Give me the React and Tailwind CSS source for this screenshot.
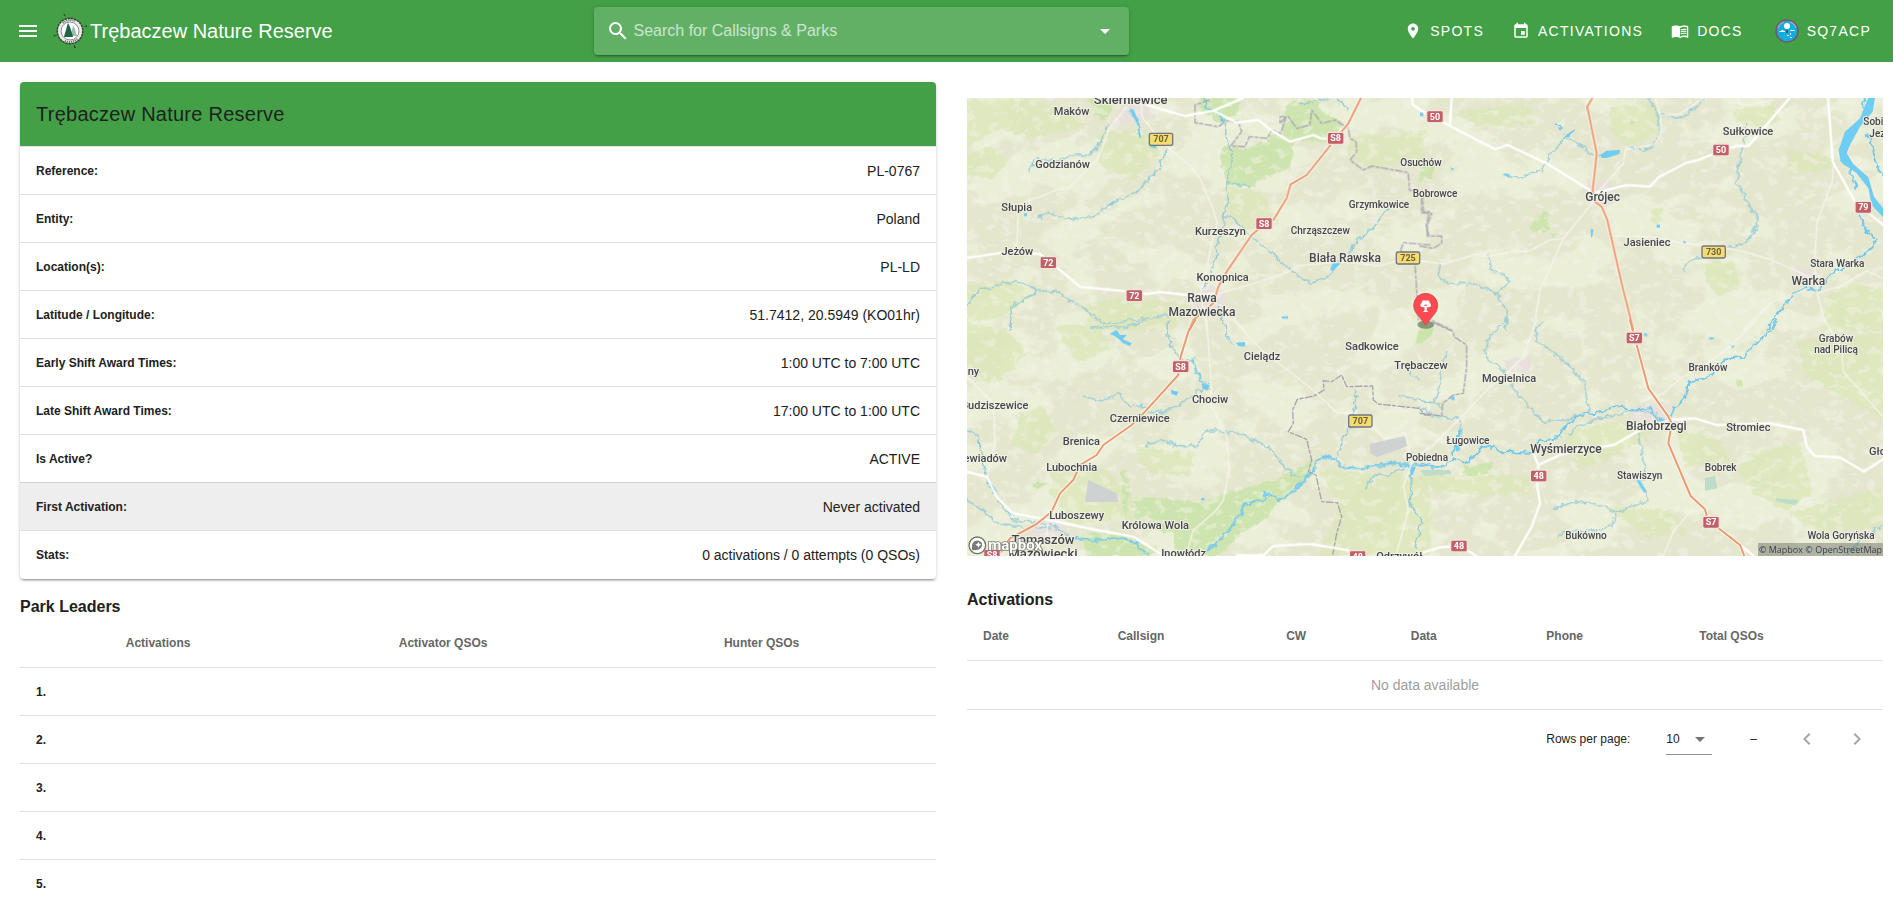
import { useState } from 'react';
import {
    MdArrowDropDown,
    MdChevronLeft,
    MdChevronRight,
    MdEvent,
    MdMenu,
    MdMenuBook,
    MdPlace,
    MdSearch,
} from 'react-icons/md';

const details = [
    { label: 'Reference:', value: 'PL-0767' },
    { label: 'Entity:', value: 'Poland' },
    { label: 'Location(s):', value: 'PL-LD' },
    { label: 'Latitude / Longitude:', value: '51.7412, 20.5949 (KO01hr)' },
    { label: 'Early Shift Award Times:', value: '1:00 UTC to 7:00 UTC' },
    { label: 'Late Shift Award Times:', value: '17:00 UTC to 1:00 UTC' },
    { label: 'Is Active?', value: 'ACTIVE' },
    { label: 'First Activation:', value: 'Never activated', active: true },
    { label: 'Stats:', value: '0 activations / 0 attempts (0 QSOs)' },
];

// [name, x, y, font size, anchor]
const places = [
    ['Skierniewice', 491, 6, 39],
    ['Maków', 314, 37, 33],
    ['Godzianów', 287, 196, 33],
    ['Słupia', 149, 326, 33],
    ['Jeżów', 151, 458, 33],
    ['Kurzeszyn', 760, 399, 33],
    ['Konopnica', 767, 536, 33],
    ['Rawa', 705, 600, 36],
    ['Mazowiecka', 705, 640, 36],
    ['Chrząszczew', 1060, 396, 30],
    ['Grzymkowice', 1236, 316, 30],
    ['Biała Rawska', 1134, 478, 36],
    ['Osuchów', 1362, 191, 30],
    ['Bobrowce', 1404, 284, 30],
    ['Grójec', 1907, 295, 36],
    ['Sułkowice', 2343, 97, 33],
    ['Jasieniec', 2040, 431, 33],
    ['Stara Warka', 2611, 495, 30],
    ['Warka', 2524, 549, 36],
    ['Sobienie', 2689, 69, 30, 'start'],
    ['Jeziory', 2707, 105, 30, 'start'],
    ['Cielądz', 885, 772, 33],
    ['Sadkowice', 1215, 742, 33],
    ['Trębaczew', 1362, 800, 33],
    ['ny', 2, 819, 33, 'start'],
    ['Budziszewice', 184, 920, 33, 'end'],
    ['Chociw', 729, 901, 33],
    ['Czerniewice', 518, 960, 33],
    ['Brenica', 343, 1027, 33],
    ['Niewiadów', 120, 1079, 33, 'end'],
    ['Lubochnia', 314, 1105, 33],
    ['Luboszewy', 329, 1251, 33],
    ['Królowa Wola', 565, 1280, 33],
    ['Tomaszów', 228, 1324, 39],
    ['Mazowiecki', 228, 1368, 39],
    ['Inowłódz', 650, 1364, 33],
    ['Odrzywół', 1297, 1372, 33],
    ['Mogielnica', 1626, 840, 33],
    ['Ługowice', 1503, 1024, 30],
    ['Pobiedna', 1380, 1075, 30],
    ['Wyśmierzyce', 1797, 1053, 36],
    ['Białobrzegi', 2068, 982, 36],
    ['Stromiec', 2344, 987, 33],
    ['Branków', 2223, 805, 30],
    ['Grabów', 2607, 720, 30],
    ['nad Pilicą', 2607, 753, 30],
    ['Stawiszyn', 2018, 1129, 30],
    ['Bobrek', 2261, 1105, 30],
    ['Bukówno', 1857, 1310, 30],
    ['Wola Goryńska', 2622, 1310, 30],
    ['Głowaczów', 2706, 1058, 33, 'start'],
];

const shields = [
    ['S8', 1106, 121],
    ['S8', 891, 377],
    ['72', 244, 494],
    ['72', 502, 593],
    ['50', 1404, 56],
    ['50', 2262, 156],
    ['79', 2689, 328],
    ['S8', 641, 806],
    ['S8', 75, 1372],
    ['48', 1172, 1376],
    ['S7', 2002, 720],
    ['48', 1715, 1134],
    ['48', 1476, 1344],
    ['S7', 2232, 1273],
    ['707', 582, 124],
    ['725', 1323, 480],
    ['730', 2240, 462],
    ['707', 1180, 969],
];

// The map is drawn as four sheets, each with its own origin
const sheets = [
    {
        origin: 'translate(-21 -24)',
        forest: [
            'M790 165 L860 180 L935 140 L1010 110 L990 235 L900 270 L880 292 L800 285 L780 200Z',
            'M720 24 H835 L840 60 L780 100 L720 60Z',
            'M985 40 L1060 24 L1090 60 L1150 100 L1110 155 L985 150 L960 90Z',
            'M385 24 H460 L440 95 L405 75Z',
            'M1380 230 H1425 L1420 265 L1375 262Z',
        ],
        park: [
            'M20 30 L210 26 L300 55 L380 110 L240 140 L110 120 L20 170Z',
            'M20 190 L90 170 L150 210 L100 265 L20 255Z',
            'M790 290 L900 300 L960 400 L840 420 L800 350Z',
            'M380 640 L520 620 L700 650 L640 720 H390Z',
            'M1170 140 L1400 120 L1390 215 L1230 235 L1160 200Z',
            'M420 130 L560 120 L600 190 L520 270 L420 220Z',
            'M20 590 L150 570 L220 610 L130 680 L20 700Z',
        ],
        town: ['M490 40 L560 45 L590 80 L530 100 L480 98 L450 120Z', 'M730 590 L780 585 L800 640 L730 680 L690 670Z'],
        roads: [
            'M0 507 L128 488 L240 492 L300 540 L360 590 L480 602 L560 612 L600 606 L690 616 L770 612',
            'M560 45 L675 78 L760 62 L830 98 L895 90 L930 118 L990 155 L1060 135 L1085 146 L1125 146',
            'M760 62 L850 24',
            'M1356 24 L1358 44 L1384 62 L1425 78',
        ],
        lanes: [
            'M545 24 V80 L575 118 L610 160 L690 228 L720 265 L760 360 L772 400 L755 460 L735 560 L722 610 L740 720',
            'M500 50 L445 120 L425 180 L410 210 L327 293 L290 300 L175 345 L170 480',
            'M770 612 L900 575 L985 545 L1010 528 L1150 515 L1260 528 L1310 512 L1410 515',
            'M760 635 L800 655 L850 720',
        ],
        highways: ['M1203 24 L1165 100 L1120 155 L1040 255 L992 283 L980 325 L940 390 L905 410 L875 435 L800 545 L775 590 L760 640 L700 690 L688 720'],
        streams: [
            'M442 108 L420 160 L385 195 L340 195 L300 210 L225 210 L210 245',
            'M622 175 L600 230 L575 255 L550 285 L520 310 L450 342 L400 380 L320 388 L285 370 L245 372 L238 385',
            'M805 275 L840 285 L872 290',
            'M790 380 L820 385 L870 440 L940 490 L990 540 L1050 580 L1105 560 L1130 525 L1175 480 L1190 450 L1240 415 L1285 350',
            'M20 645 L60 595 L120 585 L170 572 L235 602 L290 605 L370 655 L430 700 L520 690 L610 680 L690 660',
            'M150 720 L155 650 L235 602',
            'M1020 40 L1075 35 L1105 24 M1130 26 L1165 60',
            'M770 640 L790 700',
            'M740 55 L775 70 L795 100 L800 150 L818 185 L815 220 L800 275 L805 330 L790 380 L795 400 L775 450 L765 510 L730 600',
        ],
        rivers: [
            'M510 58 L530 90 L540 140',
            'M735 35 L740 55 L775 70 L790 90',
        ],
        lakes: ['M1118 520 L1135 512 L1142 520 L1120 542 L1110 540Z', 'M192 370 H201 V378 H192Z', 'M964 680 L984 678 V686 H966Z', 'M1380 66 h10 v12 h-8Z', 'M445 345 L465 330 L458 345Z', 'M510 58 L522 60 L534 92 L530 100Z', 'M566 158 L590 168 L588 176 L572 172Z'],
        borders: [
            'M748 30 L705 45 V98 L775 110 L800 92 L835 95 L845 125 L812 168 L855 170 L868 140 L922 145 L935 120 L962 130 L978 82 L960 100 L960 80 L985 80 L1010 115 L1050 105 L1055 60 L1085 100 L1125 90 L1165 115 L1170 145 L1188 155 L1190 185 L1170 210 L1210 240 L1235 228 L1345 248 L1348 300 L1388 310 L1390 365 H1408 L1398 410 L1408 440',
            'M1410 465 L1330 458 L1322 480 L1365 520 L1370 600 L1375 690',
        ],
    },
    {
        origin: 'translate(1359 -24)',
        forest: ['M345 375 L380 368 L395 405 L385 422 L332 425Z', 'M395 436 L408 432 L410 446 L395 448Z', 'M0 235 L12 272 L0 275Z', 'M630 85 l14 -2 v18 l-14 4Z'],
        park: [
            'M850 520 L940 510 L960 590 L900 620 L860 580Z',
            'M950 60 L1060 40 L1080 90 L1010 120 L940 90Z',
            'M570 50 L710 40 L715 130 L620 170 L570 120Z',
            'M1210 620 L1300 580 L1389 600 V720 H1215Z',
            'M1100 180 L1230 200 L1240 240 L1110 250Z',
            'M100 60 L330 40 L340 100 L170 110Z',
            'M690 360 L730 350 L720 400 L690 395Z',
        ],
        town: ['M490 290 L560 270 L600 320 L560 350 L500 340Z', 'M1120 530 L1200 545 L1190 590 L1130 580Z'],
        roads: [
            'M0 60 L60 92 L225 178 L262 165 L380 220 L510 300 L530 308 L620 285 L690 290 L715 262 L800 218 L835 210 L905 182 L950 168 L985 168 L1108 24',
            'M1224 24 L1238 215 L1305 335 L1389 405',
            'M510 20 L520 24 M95 24 L90 100',
        ],
        lanes: [
            'M530 310 L610 220 L615 180 L705 162 L722 130 V78 L705 24 M722 78 L780 72 L850 24',
            'M520 335 L430 445 L410 490 L360 600 L340 720',
            'M0 512 L70 522 L170 492 L205 500 L262 486 L330 482 L390 450 L430 445',
            'M575 438 L690 440 L790 460 L880 468 L960 482 L1050 508 L1100 530 L1165 560',
            'M1240 215 L1238 270 L1190 400 L1183 530 L1190 600 L1215 700',
            'M1165 595 L1050 640 L970 720',
            'M1195 608 L1260 590 L1340 542 L1389 565',
            'M955 24 V40 L985 45 L1060 30',
        ],
        highways: ['M518 22 L502 50 L530 190 L525 240 L518 300 L525 335 L545 350 L562 390 L605 580 L640 720'],
        streams: [
            'M250 255 L300 262 L365 240 L395 190 L430 148 L465 150 L510 190 L540 198',
            'M640 175 L690 180 L718 130 L715 70 L685 24',
            'M722 78 L790 82 L850 30',
            'M980 95 L970 170 L960 210 L950 280 L990 350 L1015 390 L995 440 L950 470 L920 472',
            'M845 505 L800 515 L792 540',
            'M205 500 L215 540 L275 572 L225 608 L262 660 L258 720',
            'M60 522 L55 560 L80 578 L165 582 L225 608',
            'M370 695 L345 720',
        ],
        rivers: [
            'M1315 370 L1335 420 L1370 450 L1350 480 L1290 520 L1230 555 L1195 602 L1160 595 L1120 610 L1085 655 L1060 690 L1040 718',
            'M1340 130 L1360 180 L1375 240 L1389 255 M1330 24 V60 M1265 200 L1290 240 L1310 295',
            'M405 100 L425 118 M430 145 L460 122',
        ],
        lakes: [
            'M1345 24 L1365 24 L1358 65 L1320 110 L1290 165 L1280 190 L1300 222 L1345 262 L1362 320 L1389 355 V382 L1355 345 L1345 295 L1310 250 L1262 215 L1256 180 L1275 125 L1320 85Z',
            'M540 195 L560 182 L600 180 L598 192 L560 204 L545 204Z',
            'M512 418 h8 l-3 24 h-4Z',
            'M710 404 h10 v9 h-10Z',
            'M788 454 h10 v8 h-10Z',
            'M248 253 L268 254 V263Z',
            'M630 172 L642 170 V180Z',
            'M0 68 h8 v10 h-8Z',
            'M90 232 L102 236 L98 242Z',
        ],
        borders: ['M5 325 V368 L35 370 L22 405 V438 H65 V460 L40 475 L0 468', 'M12 680 L95 720'],
    },
    {
        origin: 'translate(-21 666)',
        forest: [
            'M525 528 L720 545 L820 515 L960 475 L1060 420 L1065 455 L980 520 L915 600 L840 640 L780 708 H650 L640 640 L560 620 L525 600Z',
            'M360 640 L480 640 L600 690 L570 708 H380Z',
            'M1370 40 L1410 10 V40Z',
            'M210 490 L240 480 L262 492 L232 508Z',
            'M485 450 L500 450 L510 520 L495 600Z',
        ],
        park: [
            'M20 10 L140 30 L200 100 L110 190 L20 160Z',
            'M270 430 L440 450 L520 540 L520 600 L330 610 L270 520Z',
            'M1070 440 L1190 460 L1410 470 V708 H1080 L1140 560Z',
            'M180 280 L250 260 L290 330 L230 400 L150 380Z',
            'M530 380 L700 400 L690 470 L540 450Z',
            'M290 20 L400 10 L460 80 L350 130Z',
        ],
        town: ['M250 590 L310 610 L330 650 L260 660 L200 640Z', 'M590 600 L560 592 L540 610Z'],
        roads: [
            'M20 455 L80 470 L110 530 L155 578 L265 600 L400 628 L520 650 L600 700',
            'M830 706 L910 706 L940 678 L1050 672 L1160 690 L1200 706',
        ],
        lanes: [
            'M740 0 L755 210 L745 240 L800 345 L808 450 L790 540 L765 575 L700 630 L680 700',
            'M820 0 L905 90 L1060 210 L1130 278 L1190 280 L1275 355 L1335 338 L1355 430 L1410 375',
            'M20 170 L100 250 L105 370 L82 470',
            'M265 600 L258 660 L270 708',
            'M1355 430 L1330 500 L1345 570 L1310 700',
        ],
        highways: ['M706 0 L685 35 L662 110 L655 165 L555 275 L515 315 L430 375 L410 405 L360 435 L340 480 L300 520 L275 575 L230 612 L150 655 L120 700'],
        streams: [
            'M375 230 L420 242 L480 222 L510 258 L545 255 L570 280 L640 268 L700 225 L740 200',
            'M560 375 L600 362 L680 382 L710 375 L740 332 L835 338 L905 370 L945 400 L975 445 L1010 468 L1045 470',
            'M620 0 L625 60 L660 115 L700 125',
            'M20 330 L55 350 L70 430 L85 490 L130 560 L160 600 L270 612 L340 655',
            'M20 540 L70 570 L110 610 L180 620 L270 625',
            'M1190 210 L1175 320 L1150 350 L1140 390 L1125 415',
            'M390 24 L500 20 L560 0 M795 10 L800 50 L820 75',
            'M1215 505 L1240 470 L1300 460 L1330 440',
            'M1355 450 L1350 550 L1385 600 L1365 680',
            'M1320 228 L1410 245 M1350 155 L1375 180',
        ],
        rivers: [
            'M725 708 L760 675 L800 640 L830 600 L860 550 L915 542 L915 520 L940 520 L955 542 L1000 515 L1040 470 L1062 452 L1070 420 L1110 410 L1145 440 L1205 445 L1290 430 L1355 435 L1410 432',
            'M345 655 L400 660 L470 655 L520 665 L560 700 M700 118 L710 160 L740 200',
            'M85 490 L110 520',
        ],
        lakes: [
            'M450 42 L470 30 L480 45 L500 45 L488 58 L515 70 L510 78 L490 70 L468 50Z',
            'M828 68 L855 66 V80 L835 78Z',
            'M632 210 L655 215 L650 227 L635 222Z',
            'M725 192 L748 195 L742 212 L728 205Z',
            'M724 534 h9 v7 h-9Z',
            'M1350 440 h18 l-10 25 h-6Z',
        ],
        airfields: ['M385 480 L470 520 L476 546 L375 546Z', 'M1228 372 L1338 348 L1344 378 L1250 412 L1232 400Z'],
        borders: [
            'M1410 285 L1395 285 L1378 265 L1255 252 L1240 240 L1238 198 L1160 200 L1145 165 L1115 185 L1090 182 L1092 210 L1062 228 L1012 238 L998 270 L1000 310 L985 335 L1040 358 L1055 420 L1045 455 L1068 465 L1085 545 L1132 548 L1145 590 L1130 640 L1118 706',
        ],
    },
    {
        origin: 'translate(1359 666)',
        forest: ['M0 0 L40 8 L0 38Z', 'M950 185 L970 178 L965 205 L950 200Z', 'M130 440 L220 425 L215 455 L120 470Z'],
        park: [
            'M0 460 L330 470 L325 520 L150 530 L0 500Z',
            'M990 400 L1140 370 L1180 520 L1100 570 L1000 520 L950 450Z',
            'M430 340 L600 300 L700 340 L560 420 L480 450Z',
            'M1130 60 L1389 40 V300 L1290 240 L1160 170Z',
            'M760 320 L900 360 L930 420 L800 440Z',
            'M1100 580 L1389 500 V620 L1200 640Z',
            'M560 560 L760 570 L800 640 L680 650Z',
        ],
        town: ['M630 260 L740 240 L760 330 L650 335Z', 'M255 120 L330 110 L330 160 L260 155Z'],
        roads: [
            'M340 400 L355 435 L352 500 L360 550 L335 620 L285 708',
            'M355 435 L430 400 L580 375 L660 330 L750 300 L825 295 L890 315 L1050 310 L1150 330 L1160 380 L1185 408 L1260 412 L1332 455 L1389 418',
            'M0 700 L60 682 L120 678 L170 708',
            'M895 625 L1000 706',
        ],
        lanes: [
            'M350 0 L310 110 L270 150 L200 210 L130 285 L20 395',
            'M660 245 L730 220 L780 175 L860 130 L930 80 L1010 0',
            'M730 706 L760 635 L810 575 L850 568',
            'M1215 0 L1265 90 L1270 155 L1389 290',
        ],
        highways: ['M630 0 L650 75 L685 205 L745 290 L755 310 L745 370 L812 528 L855 568 L865 605 L900 628 L960 675 L973 708'],
        streams: [
            'M260 0 L210 50 L192 105 L260 160 L290 220 L370 305 L440 300 L480 285',
            'M345 0 L350 60 L440 130 L490 185 L508 280',
            'M450 340 L470 320 L540 295 L640 270 L700 280 L720 295',
            'M655 340 L675 440 L670 480',
            'M680 515 L685 540 L590 578 L525 550 L465 545 L400 565',
            'M590 578 L575 618 L520 632 L430 635 L410 650',
            'M80 95 L65 140 L62 190 L42 245 L0 240 M42 245 L65 262',
            'M0 262 L40 288 L120 298 L125 325 L110 375',
            'M1389 618 L1330 650 L1280 706',
        ],
        rivers: [
            'M0 440 L70 440 L100 415 L135 430 L175 400 L185 380 L225 380 L235 395 L335 398 L360 362 L415 355 L430 325 L480 285 L530 278 L590 258 L635 268 L690 265 L710 295 L745 305 L760 270 L795 235 L810 185 L865 172 L925 115 L970 110 L1005 70 L1040 45 L1072 0',
            'M120 330 L110 370 L95 405',
        ],
        lakes: [
            'M648 480 L660 480 L680 515 L672 518Z',
            'M930 74 L945 78 L935 84Z',
            'M866 52 h15 v6 h-12Z',
            'M672 40 h9 v8 h-9Z',
            'M105 380 L118 360 L120 390 L108 395Z',
            'M92 230 h12 v10 h-10Z',
        ],
        ponds: ['M855 475 L885 468 L892 505 L855 512Z', 'M1065 535 L1135 540 L1128 555 L1070 545Z', 'M0 450 L90 450 L95 462 L15 468Z'],
        borders: ['M40 8 L100 35 L102 50 L140 75 L140 140 L130 220 L100 225 L68 250 L65 288 L0 280'],
    },
];

const MapPaths = ({ layer, ...rest }) => (
    <g fill="none" strokeLinejoin="round" strokeLinecap="round" {...rest}>
        {sheets.map((sheet) => (
            <g key={sheet.origin} transform={sheet.origin}>
                {(sheet[layer] || []).map((d) => (
                    <path key={d} d={d} />
                ))}
            </g>
        ))}
    </g>
);

const Shield = ({ label, x, y }) => {
    const local = label.length === 3;
    const width = local ? 68 : 48;
    return (
        <g>
            <rect x={x - width / 2 - 3} y={y - 20} width={width + 6} height="40" rx="7" fill={local ? '#707584' : '#f1e3dc'} />
            <rect x={x - width / 2 + 1} y={y - 16} width={width - 2} height="32" rx="4" fill={local ? '#f4dc72' : '#c06067'} />
            <text x={x} y={y + 9} textAnchor="middle" fontSize="27" fontWeight="700" fill={local ? '#6b6334' : '#fff'}>
                {label}
            </text>
        </g>
    );
};

const ParkMap = () => (
    <div className="relative">
        <svg viewBox="0 0 2748 1374" className="block w-full overflow-hidden font-['Roboto',sans-serif]" role="img" aria-label="Map">
            <defs>
                <filter id="fields" x="0" y="0" width="100%" height="100%">
                    <feTurbulence type="fractalNoise" baseFrequency="0.005 0.007" numOctaves="7" seed="11" />
                    <feColorMatrix values="0 0 0 0 0.863  0 0 0 0 0.906  0 0 0 0 0.725  12 0 0 0 -6" />
                </filter>
                <filter id="villages" x="0" y="0" width="100%" height="100%">
                    <feTurbulence type="fractalNoise" baseFrequency="0.03 0.04" numOctaves="5" seed="4" />
                    <feColorMatrix values="0 0 0 0 0.925  0 0 0 0 0.902  0 0 0 0 0.839  0 9 0 0 -5" />
                </filter>
                <filter id="meander" x="-5%" y="-5%" width="110%" height="110%">
                    <feTurbulence type="fractalNoise" baseFrequency="0.05" numOctaves="3" seed="2" />
                    <feDisplacementMap in="SourceGraphic" scale="22" xChannelSelector="R" yChannelSelector="G" />
                </filter>
            </defs>
            <rect width="2748" height="1374" fill="#e4e6cd" />
            <rect width="2748" height="1374" filter="url(#fields)" opacity="0.7" />
            <g filter="url(#meander)">
                <MapPaths layer="park" fill="#dce7b9" opacity="0.8" />
                <MapPaths layer="forest" fill="#cbe4ac" opacity="0.9" />
                <MapPaths layer="town" fill="#e8e0da" />
            </g>
            <rect width="2748" height="1374" filter="url(#villages)" opacity="0.4" />
            <MapPaths layer="airfields" fill="#cfd2d3" />
            <MapPaths layer="ponds" fill="#bddcc9" />
            <g filter="url(#meander)">
                <MapPaths layer="streams" stroke="#8ec9da" strokeWidth="4" />
                <MapPaths layer="rivers" stroke="#72c8ee" strokeWidth="6" />
            </g>
            <MapPaths layer="lakes" fill="#6fcdf3" />
            <MapPaths layer="borders" stroke="#a7a3b3" strokeWidth="4" strokeDasharray="20 7 9 7" />
            <MapPaths layer="lanes" stroke="#f6f5ec" strokeWidth="4" />
            <MapPaths layer="roads" stroke="#fff" strokeWidth="7" />
            <MapPaths layer="highways" stroke="#fdf6ee" strokeWidth="12" />
            <MapPaths layer="highways" stroke="#e69c70" strokeWidth="6" />
            {shields.map(([label, x, y]) => (
                <Shield key={`${x}-${y}`} label={label} x={x} y={y} />
            ))}
            <g fill="#45474e" stroke="#f0f0e2" strokeWidth="6" strokeLinejoin="round" paintOrder="stroke" fontWeight="500">
                {places.map(([name, x, y, size, anchor = 'middle']) => (
                    <text key={name} x={x} y={y + 13} fontSize={size} textAnchor={anchor}>
                        {name}
                    </text>
                ))}
            </g>

            {/* park marker */}
            <path d="M1355 700 L1400 680 L1395 710 L1365 735 L1345 738Z" fill="#cbe4ac" />
            <ellipse cx="1376" cy="680" rx="25" ry="12" fill="#3b4a34" opacity="0.5" />
            <path
                d="M1376 681 L1348 646 C1342 638 1340 630 1340 622 A36 36 0 0 1 1412 622 C1412 630 1410 638 1404 646Z"
                fill="#fb4b50"
                stroke="#d13d42"
                strokeWidth="2"
                strokeLinejoin="round"
            />
            <g fill="#fff">
                <circle cx="1366" cy="621" r="6" />
                <circle cx="1386" cy="621" r="6" />
                <circle cx="1371" cy="614" r="7" />
                <circle cx="1381" cy="614" r="7" />
                <path d="M1361 623 H1391 Q1388 629 1380 627 L1379 637 L1384 642 H1368 L1373 637 L1372 627 Q1364 629 1361 623Z" />
            </g>

            {/* mapbox wordmark */}
            <circle cx="31" cy="1342" r="25" fill="#fff" stroke="#6f756a" strokeWidth="4" />
            <circle cx="31" cy="1342" r="19" fill="#fff" />
            <path d="M16 1357 C10 1332 25 1325 36 1328 C51 1334 50 1358 16 1357Z" fill="#777c72" />
            <path d="M34 1331 l3 6 6 3 -6 3 -3 6 -3 -6 -6 -3 6 -3Z" fill="#fff" />
            <text
                x="64"
                y="1356"
                fontSize="45"
                fontWeight="700"
                fill="#fff"
                stroke="#777c72"
                strokeWidth="5"
                paintOrder="stroke"
            >
                mapbox
            </text>
        </svg>
        <div className="absolute right-0 bottom-0 bg-black/25 px-px text-[9px] leading-[13px] text-gray-700 font-['Open_Sans',sans-serif]">
            <a href="#mapbox">© Mapbox</a> <a href="#osm">© OpenStreetMap</a>
        </div>
    </div>
);

const Logo = () => (
    <svg viewBox="0 0 36 36" className="size-9" aria-hidden="true">
        <g fill="#2c4a2f">
            <path d="M11 1 l2 0 1 3Z M24 35 l-2 0 0 -4Z M1 24 l1 -2 3 0Z M35 12 l0 2 -3 0Z" />
        </g>
        <circle cx="18" cy="18" r="12" fill="#f4f4f4" stroke="#3a3a3a" strokeWidth="3" strokeDasharray="2 1" />
        <circle cx="18" cy="18" r="11" fill="none" stroke="#e8e8e8" strokeWidth="2" />
        <path d="M11 10 A11 11 0 0 1 23 8 M13 28 A11 11 0 0 0 25 26" fill="none" stroke="#666" strokeWidth="2" strokeDasharray="1 1" />
        <circle cx="18" cy="18" r="9" fill="#fff" stroke="#8a8a8a" />
        <path d="M21 12 l2 4 1 4 1 3 h-6Z" fill="#a3bbae" />
        <path d="M16 10 l2 4 1 3 1 3 1 4 h-9 l1 -4 1 -3 1 -4Z" fill="#1b6444" />
    </svg>
);

const Avatar = () => (
    <svg viewBox="0 0 24 24" className="size-6" aria-hidden="true">
        <circle cx="12" cy="12" r="11" fill="#12aedb" stroke="#7b5369" strokeWidth="1.5" />
        <path d="M3 9 A9 9 0 0 1 9 3 M15 3 A9 9 0 0 1 21 9" fill="none" stroke="#9aa7cf" strokeWidth="1.5" />
        <circle cx="12" cy="7" r="3" fill="#fff" />
        <path d="M4 13 q0 -1 2 -1 q1 -2 3 0 q2 0 1 1Z M15 12 q1 -2 3 -1 q2 0 2 1Z" fill="#fff" />
        <path d="M11 11 h2 v3 h-2Z" fill="#456" />
        <path d="M12 16 h2 v1 h-2Z M15 14 h1 v2 h-1Z M15 18 h2 v1 h-2Z" fill="#cdefff" />
    </svg>
);

const navItems = [
    { name: 'SPOTS', icon: MdPlace },
    { name: 'ACTIVATIONS', icon: MdEvent },
    { name: 'DOCS', icon: MdMenuBook },
];

const Header = () => (
    <header className="grid grid-cols-[7fr_535px_9fr] items-center bg-[#43a047] h-[62px] pl-4 pr-[22px] text-white">
        <div className="flex items-center">
            <button aria-label="Menu">
                <MdMenu size={24} />
            </button>
            <a href="#home" className="ml-3 flex items-center gap-0.5">
                <Logo />
                <span className="text-xl">Trębaczew Nature Reserve</span>
            </a>
        </div>

        <div className="flex h-12 items-center rounded bg-[#62b066] pl-3 pr-3 shadow-[0_3px_1px_-2px_rgba(0,0,0,0.2),0_2px_2px_0_rgba(0,0,0,0.14),0_1px_5px_0_rgba(0,0,0,0.12)]">
            <MdSearch size={24} />
            <input
                type="text"
                aria-label="Search for Callsigns & Parks"
                placeholder="Search for Callsigns & Parks"
                className="ml-1 min-w-0 flex-1 bg-transparent text-base outline-none placeholder:text-[#cbe5cc]"
            />
            <button aria-label="Open search results">
                <MdArrowDropDown size={24} />
            </button>
        </div>

        <nav className="flex items-center justify-end gap-7 text-sm tracking-[0.09em]">
            {navItems.map(({ name, icon: Icon }) => (
                <a key={name} href={`#${name.toLowerCase()}`} className="flex items-center gap-2">
                    <Icon size={18} /> {name}
                </a>
            ))}
            <button className="ml-1 flex items-center gap-2 tracking-[0.09em]">
                <Avatar /> SQ7ACP
            </button>
        </nav>
    </header>
);

const DetailsCard = () => (
    <section className="overflow-hidden rounded bg-white pb-px shadow-[0_3px_1px_-2px_rgba(0,0,0,0.2),0_2px_2px_0_rgba(0,0,0,0.14),0_1px_5px_0_rgba(0,0,0,0.12)]">
        <h1 className="flex h-16 items-center bg-[#43a047] px-4 text-xl tracking-[0.0125em]">Trębaczew Nature Reserve</h1>
        <table className="w-full border-separate border-spacing-0">
            <tbody>
                {details.map((item) => (
                    <tr key={item.label} className={item.active ? 'bg-[#eeeeee]' : ''}>
                        <th scope="row" className="h-12 border-t border-black/12 px-4 text-left text-xs font-bold">
                            {item.label}
                        </th>
                        <td className="h-12 border-t border-black/12 px-4 text-right text-sm">{item.value}</td>
                    </tr>
                ))}
            </tbody>
        </table>
    </section>
);

const ParkLeaders = () => (
    <section className="mt-4">
        <h2 className="font-bold leading-6">Park Leaders</h2>
        <table className="w-full table-fixed border-separate border-spacing-0 text-left text-xs">
            <thead className="text-[#666666]">
                <tr>
                    <td className="h-12 w-[9.8%]"></td>
                    <th className="h-12 w-[29.8%] px-4 font-bold">Activations</th>
                    <th className="h-12 w-[35.5%] px-4 font-bold">Activator QSOs</th>
                    <th className="h-12 px-4 font-bold">Hunter QSOs</th>
                </tr>
            </thead>
            <tbody>
                {[1, 2, 3, 4, 5].map((rank) => (
                    <tr key={rank}>
                        <th scope="row" className="h-12 border-t border-black/12 px-4 font-bold">{rank}.</th>
                        <td className="border-t border-black/12"></td>
                        <td className="border-t border-black/12"></td>
                        <td className="border-t border-black/12"></td>
                    </tr>
                ))}
            </tbody>
        </table>
    </section>
);

const Activations = () => {
    const [perPage, setPerPage] = useState('10');

    return (
        <section className="mt-8">
            <h2 className="font-bold leading-6">Activations</h2>
            <table className="w-full table-fixed border-separate border-spacing-0 text-left">
                <thead className="text-xs text-[#666666]">
                    <tr>
                        <th className="h-12 w-[14.7%] px-4 font-bold">Date</th>
                        <th className="w-[18.4%] px-4 font-bold">Callsign</th>
                        <th className="w-[13.6%] px-4 font-bold">CW</th>
                        <th className="w-[14.8%] px-4 font-bold">Data</th>
                        <th className="w-[16.7%] px-4 font-bold">Phone</th>
                        <th className="px-4 font-bold">Total QSOs</th>
                    </tr>
                </thead>
                <tbody>
                    <tr>
                        <td colSpan={6} className="h-[50px] border-y border-black/12 text-center text-sm text-[#9e9e9e]">
                            No data available
                        </td>
                    </tr>
                </tbody>
            </table>
            <div className="flex h-[58px] items-center justify-end pr-[14px] text-xs">
                <label htmlFor="rows-per-page">Rows per page:</label>
                <div className="relative ml-9 h-8 w-[46px] border-b border-[#949494]">
                    <select
                        id="rows-per-page"
                        value={perPage}
                        onChange={(e) => setPerPage(e.target.value)}
                        className="h-full w-full appearance-none bg-transparent outline-none"
                    >
                        <option>5</option>
                        <option>10</option>
                        <option>15</option>
                    </select>
                    <MdArrowDropDown size={24} className="pointer-events-none absolute right-0 top-1 text-[#757575]" />
                </div>
                <span className="mx-[38px]">–</span>
                <button disabled aria-label="Previous page" className="text-black/35">
                    <MdChevronLeft size={24} />
                </button>
                <button disabled aria-label="Next page" className="ml-[26px] text-black/35">
                    <MdChevronRight size={24} />
                </button>
            </div>
        </section>
    );
};

const App = () => (
    <div className="min-h-screen bg-white text-[#212121] font-['Liberation_Sans',Arial,sans-serif]">
        <Header />
        <main className="grid grid-cols-2 gap-[31px] pl-5 pr-[10px] pt-5">
            <div>
                <DetailsCard />
                <ParkLeaders />
            </div>
            <div className="pt-4">
                <ParkMap />
                <Activations />
            </div>
        </main>
    </div>
);

export default App;
